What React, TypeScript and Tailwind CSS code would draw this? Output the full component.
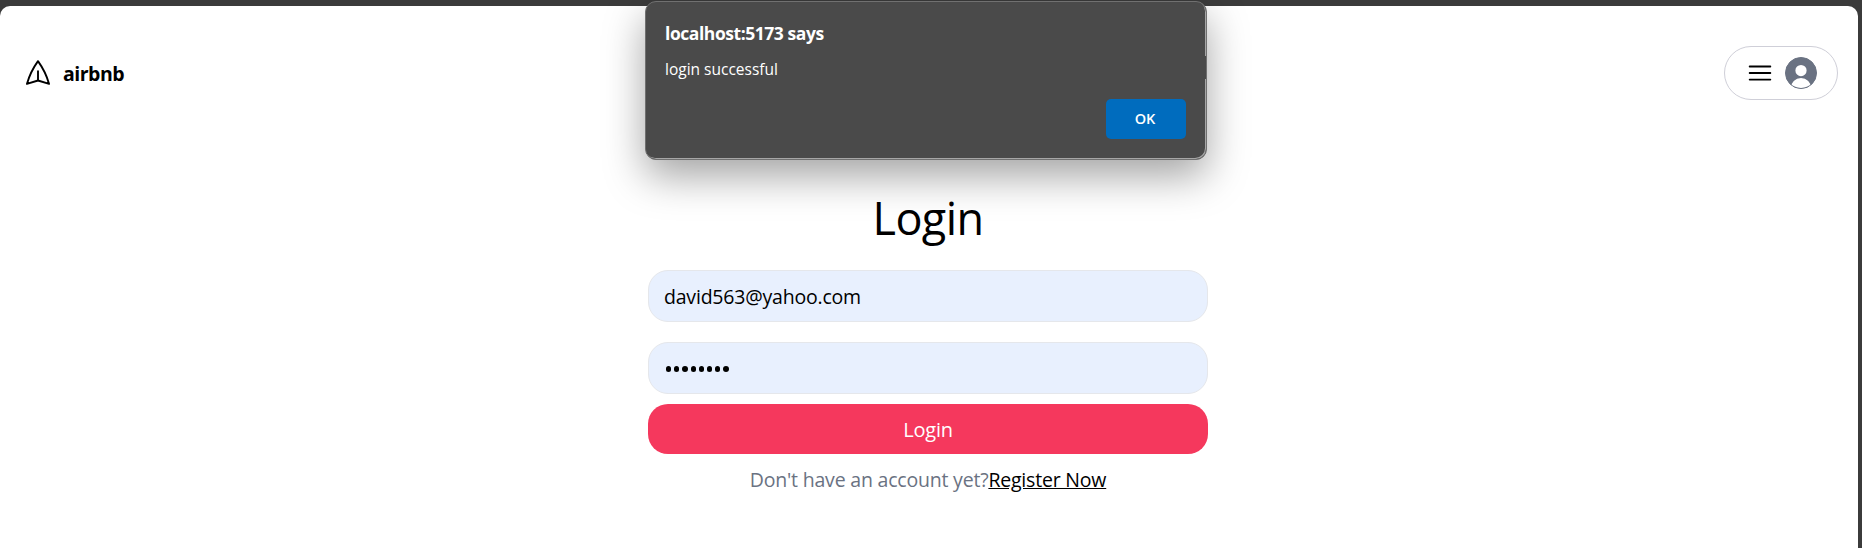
import React from "react";

function Header() {
  return (
    <header className="flex items-start justify-between pl-[23px] pr-[20px] pt-[40px]">
      <a className="flex items-center gap-[10px] pt-[12px]">
        <svg className="size-[30px] -rotate-90" viewBox="0 0 24 24" fill="none" stroke="currentColor" strokeWidth="1.5" strokeLinecap="round" strokeLinejoin="round">
          <path d="M6 12 3.269 3.125A59.769 59.769 0 0 1 21.485 12 59.768 59.768 0 0 1 3.27 20.875L5.999 12Zm0 0h7.5" />
        </svg>
        <span className="pt-[2px] text-[19.5px] leading-[28px] font-bold tracking-[-0.5px]">airbnb</span>
      </a>
      <div className="flex h-[54px] w-[114px] items-center gap-[10px] rounded-full border border-[#cfcfd8] pl-[20px]">
        <svg className="size-[30px]" viewBox="0 0 24 24" fill="none" stroke="currentColor" strokeWidth="1.5" strokeLinecap="round" strokeLinejoin="round">
          <path d="M3.75 6.75h16.5M3.75 12h16.5m-16.5 5.25h16.5" />
        </svg>
        <div className="size-[32px] overflow-hidden rounded-full border border-gray-500 bg-gray-500 pt-[5px] text-white">
          <svg className="size-[30px]" viewBox="0 0 24 24" fill="currentColor">
            <path fillRule="evenodd" clipRule="evenodd" d="M7.5 6a4.5 4.5 0 119 0 4.5 4.5 0 01-9 0zM3.751 20.105a8.25 8.25 0 0116.498 0 .75.75 0 01-.437.695A18.683 18.683 0 0112 22.5c-2.786 0-5.433-.608-7.812-1.7a.75.75 0 01-.437-.695z" />
          </svg>
        </div>
      </div>
    </header>
  );
}

function LoginForm() {
  return (
    <main className="ml-[648px] mt-[93px] flex w-[560px] flex-col">
      <h1 className="text-center text-[45px] leading-[50px] tracking-[-0.6px]">Login</h1>
      <div className="mt-[27px] flex h-[52px] items-center rounded-[20px] border border-gray-200 bg-[#e8f0fe] px-[15px] pt-px text-[19.5px] tracking-[-0.2px]">
        <span>david563@yahoo.com</span>
      </div>
      <div className="mt-[20px] flex h-[52px] items-center gap-[3px] rounded-[20px] border border-gray-200 bg-[#e8f0fe] px-[17px] pt-[2px]">
        {Array.from({ length: 8 }, (_, i) => (
          <i key={i} className="size-[5.2px] rounded-full bg-black" />
        ))}
      </div>
      <button className="mt-[10px] h-[50px] rounded-[20px] bg-[#f5385d] pt-px text-[20px] tracking-[-0.2px] text-white">Login</button>
      <p className="mt-[11px] text-center text-[19.5px] leading-[30px] tracking-[-0.2px] text-gray-500">
        <span>Don't have an account yet?</span>
        <a className="text-black underline">Register Now</a>
      </p>
    </main>
  );
}

function AlertDialog() {
  return (
    <div className="absolute left-[645px] top-px flex h-[159px] w-[562px] flex-col rounded-[11px] border border-[#707070] bg-[#4a4a4a] pl-[19px] pr-[20px] pt-[18px] text-white shadow-[inset_-1px_-1px_0_#a6a6a6,0_16px_40px_rgba(0,0,0,0.36)]">
      <i className="absolute right-0 top-[54px] h-[23px] w-px bg-[#4a4a4a]" />
      <h2 className="text-[17.5px] leading-[26px] font-bold tracking-[-0.45px]">
        <span>localhost:5173 says</span>
      </h2>
      <p className="mt-[12px] text-[15.5px] leading-[22px]">
        <span>login successful</span>
      </p>
      <button className="mt-[19px] h-[40px] w-[80px] self-end rounded-[5px] bg-[#006cbe] pr-[2px] text-[14.5px] font-semibold">OK</button>
    </div>
  );
}

export default function App() {
  return (
    <div className="relative h-[548px] overflow-hidden bg-[#3b3b3b] pr-[4px] pt-[6px] font-['Open_Sans','Noto_Sans',sans-serif] text-black">
      <div className="h-[542px] rounded-t-[10px] bg-white">
        <Header />
        <LoginForm />
      </div>
      <AlertDialog />
    </div>
  );
}
